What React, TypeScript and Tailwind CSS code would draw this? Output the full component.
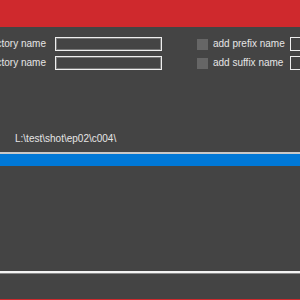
export default function App() {
  const rows = [
    { label: "directory name", check: "add prefix name" },
    { label: "directory name", check: "add suffix name" },
  ];

  return (
    <div className="w-[300px] h-[300px] overflow-hidden bg-[#444444] flex flex-col text-[#e6e6e6] text-[10px] leading-none font-['Liberation_Sans',Arial,sans-serif]">
      <div className="h-[27px] shrink-0 bg-[#cf292d]" />

      <div className="mt-[10px] flex flex-col gap-[5px]">
        {rows.map((r, i) => (
          <div key={i} className="flex items-center h-[14px]">
            <div className="w-[46px] shrink-0 flex justify-end whitespace-nowrap">
              <span>{r.label}</span>
            </div>
            <div className="ml-[9px] w-[107px] h-[14px] shrink-0 border border-[#eeeeee] shadow-[inset_0_0_0_1px_#777]" />
            <div className="ml-[35px] w-[11px] h-[11px] shrink-0 bg-[#666666]" />
            <span className="ml-[5px] whitespace-nowrap">{r.check}</span>
            <div className="ml-auto w-[20px] -mr-[10px] h-[14px] shrink-0 border border-[#eeeeee]" />
          </div>
        ))}
      </div>

      <div className="mt-[64px] pl-[15px] h-[10px] flex items-center whitespace-nowrap">
        L:\test\shot\ep02\c004\
      </div>

      <div className="mt-[8px] h-[2px] shrink-0 bg-[#c8c8c8]" />
      <div className="h-[12px] shrink-0 bg-[#0078d7]" />

      <div className="flex-1" />
      <div className="h-[2px] shrink-0 bg-[#f4f4f4]" />
      <div className="h-[1px] shrink-0 bg-[#8a8a8a]" />
      <div className="h-[25px] shrink-0" />
      <div className="h-[1px] shrink-0 bg-[#cf292d]" />
    </div>
  );
}
